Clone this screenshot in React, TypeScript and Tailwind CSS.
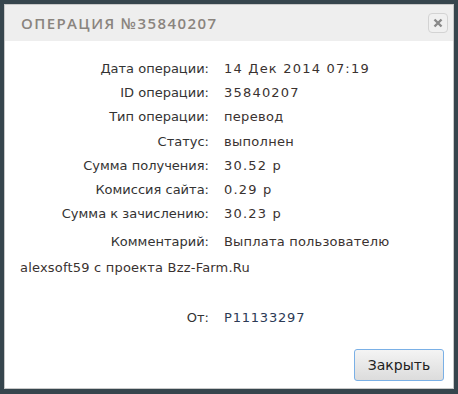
import React from "react";

const rows: [string, string, boolean][] = [
  ["Дата операции:", "14 Дек 2014 07:19", true],
  ["ID операции:", "35840207", true],
  ["Тип операции:", "перевод", false],
  ["Статус:", "выполнен", false],
  ["Сумма получения:", "30.52 р", true],
  ["Комиссия сайта:", "0.29 р", true],
  ["Сумма к зачислению:", "30.23 р", true],
];

const Label: React.FC<{ children: React.ReactNode }> = ({ children }) => (
  <span className="inline-block w-[204px] pr-[15px] text-right">{children}</span>
);

export default function App() {
  return (
    <div className="w-[458px] h-[394px] bg-[#36454d] p-[4px] pb-[5px]">
      <div className="flex h-full flex-col border border-[#c8c8c8] bg-white">
        {/* Header */}
        <div className="flex h-[36px] items-center justify-between bg-[#eeeeee] pl-[16px] pr-[5px]">
          <span className="mt-[1px] font-['Open_Sans',sans-serif] text-[15px] font-semibold tracking-[1.4px] text-[#8a847e]">
            ОПЕРАЦИЯ №35840207
          </span>
          <button className="flex h-[20px] w-[20px] items-center justify-center rounded-[4px] border border-[#d3d3d3] bg-[#f0f0f0]">
            <svg width="10" height="10" viewBox="0 0 10 10">
              <path d="M1.5 1.5 L8.5 8.5 M8.5 1.5 L1.5 8.5" stroke="#8a8a8a" strokeWidth="2.4" />
            </svg>
          </button>
        </div>

        {/* Body */}
        <div className="flex-1 px-[15px] pt-[16px] font-['DejaVu_Sans',sans-serif] text-[13px] leading-[24.2px] text-[#333]">
          {rows.map(([k, v, num]) => (
            <div key={k}>
              <Label>{k}</Label>
              <span className={num ? "tracking-[1.2px] text-[#3a3230]" : "tracking-[0.3px] text-[#3a3230]"}>{v}</span>
            </div>
          ))}
          <div className="mt-[3px] leading-[26px]">
            <Label>Комментарий:</Label>
            <span className="tracking-[0.2px] text-[#3a3230]">Выплата пользователю alexsoft59 с проекта Bzz-Farm.Ru</span>
          </div>
          <div className="mt-[25px]">
            <Label>От:</Label>
            <span className="tracking-[0.8px] text-[#2c3a55]">P11133297</span>
          </div>
        </div>

        {/* Footer */}
        <div className="flex justify-end px-[9px] pb-[7px]">
          <button className="h-[32px] w-[90px] rounded-[3px] border border-[#7ab0e6] bg-gradient-to-b from-[#f4f4f4] to-[#dcdcdc] font-['DejaVu_Sans',sans-serif] text-[14px] text-[#222]">
            Закрыть
          </button>
        </div>
      </div>
    </div>
  );
}
